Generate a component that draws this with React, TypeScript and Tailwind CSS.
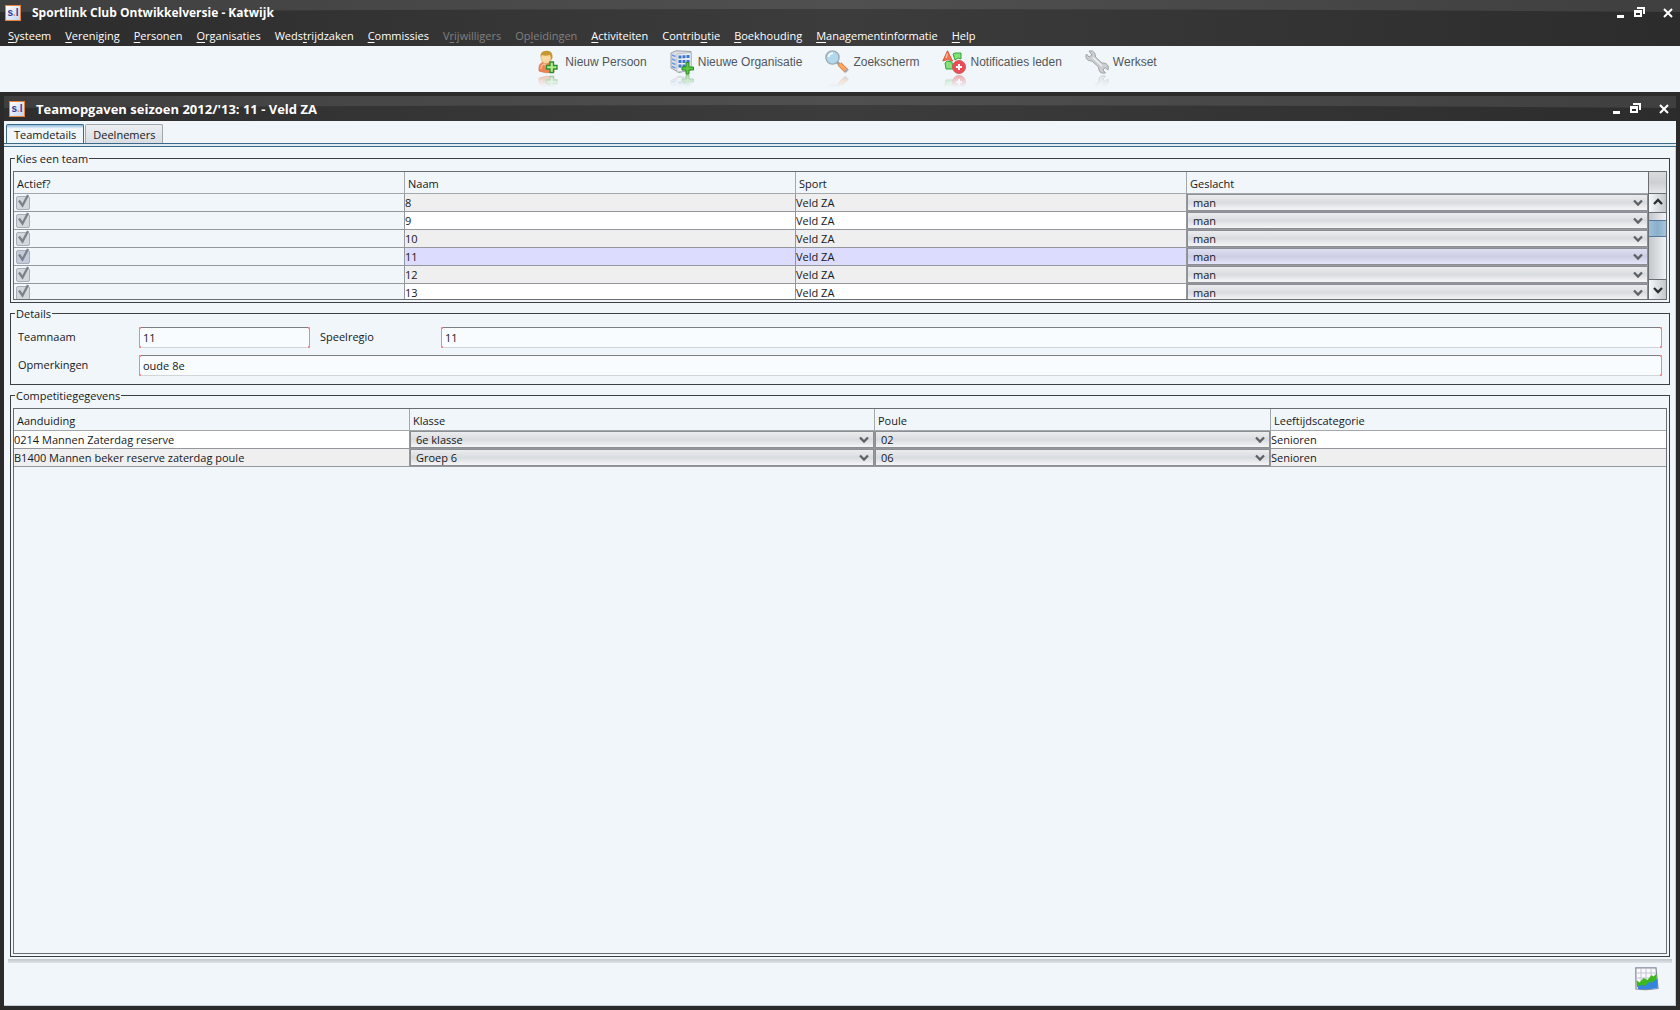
import { useId, useState } from 'react'
import type { ReactNode } from 'react'

const MENU = [
  { pre: '', key: 'S', post: 'ysteem' },
  { pre: '', key: 'V', post: 'ereniging' },
  { pre: '', key: 'P', post: 'ersonen' },
  { pre: '', key: 'O', post: 'rganisaties' },
  { pre: 'Weds', key: 't', post: 'rijdzaken' },
  { pre: '', key: 'C', post: 'ommissies' },
  { pre: 'V', key: 'r', post: 'ijwilligers', disabled: true },
  { pre: 'Op', key: 'l', post: 'eidingen', disabled: true },
  { pre: '', key: 'A', post: 'ctiviteiten' },
  { pre: 'Contrib', key: 'u', post: 'tie' },
  { pre: '', key: 'B', post: 'oekhouding' },
  { pre: '', key: 'M', post: 'anagementinformatie' },
  { pre: '', key: 'H', post: 'elp' },
]

const TEAMS = ['8', '9', '10', '11', '12', '13']

const COMPETITIONS = [
  { name: '0214 Mannen Zaterdag reserve', klasse: '6e klasse', poule: '02', age: 'Senioren' },
  { name: 'B1400 Mannen beker reserve zaterdag poule', klasse: 'Groep 6', poule: '06', age: 'Senioren' },
]

function AppLogo() {
  return (
    <span className="flex h-4 w-4 shrink-0 items-center justify-center border border-[#e8813a] bg-linear-to-br from-white to-[#c3d3ee] font-['Liberation_Sans'] text-[10px] leading-none font-bold text-[#2b3a9c]">
      s<span className="text-[#f08a3c]">.</span>l
    </span>
  )
}

function WindowControls() {
  return (
    <div className="flex items-center text-white">
      <button aria-label="Minimaliseren" className="flex h-4 w-[17px] items-center justify-start">
        <svg width="8" height="12" viewBox="0 0 8 12"><rect x="0" y="8" width="7" height="3" fill="#fff" /></svg>
      </button>
      <button aria-label="Herstellen" className="flex h-4 w-[29px] items-center justify-start">
        <svg width="12" height="12" viewBox="0 0 12 12" shapeRendering="crispEdges">
          <path d="M3 0h8v7H9V2H3z" fill="#fff" />
          <path d="M0 3h8v7H0zM2 6v2h4V6z" fill="#fff" fillRule="evenodd" />
        </svg>
      </button>
      <button aria-label="Sluiten" className="flex h-4 w-[10px] items-center justify-center">
        <svg width="10" height="10" viewBox="0 0 10 10"><path d="M1 1l8 8M9 1L1 9" stroke="#fff" strokeWidth="2" /></svg>
      </button>
    </div>
  )
}

/* Curved gloss along the top of a title bar */
function Gloss() {
  const id = useId()
  return (
    <svg className="absolute inset-x-0 top-0 h-3 w-full" viewBox="0 0 1680 12" preserveAspectRatio="none" aria-hidden="true">
      <defs>
        <linearGradient id={id}>
          <stop offset="0" stopColor="#3f3f3f" />
          <stop offset="0.5" stopColor="#505050" />
          <stop offset="1" stopColor="#3f3f3f" />
        </linearGradient>
      </defs>
      <path d="M0 0H1680V12Q840 6 0 12z" fill={`url(#${id})`} />
    </svg>
  )
}

function Reflected({ children }: { children: ReactNode }) {
  const id = useId()
  return (
    <svg width="24" height="38" viewBox="0 0 24 38" className="shrink-0" aria-hidden="true">
      <defs>
        <linearGradient id={`${id}g`} x1="0" y1="24" x2="0" y2="37" gradientUnits="userSpaceOnUse">
          <stop offset="0" stopColor="#fff" stopOpacity="0.5" />
          <stop offset="1" stopColor="#fff" stopOpacity="0" />
        </linearGradient>
        <mask id={id} maskUnits="userSpaceOnUse" x="0" y="24" width="24" height="14">
          <rect x="0" y="24" width="24" height="14" fill={`url(#${id}g)`} />
        </mask>
      </defs>
      {children}
      <g mask={`url(#${id})`}>
        <g transform="translate(0 49) scale(1 -1)">{children}</g>
      </g>
    </svg>
  )
}

function PersonIcon() {
  return (
    <Reflected>
      <path d="M2 21V18Q2 13 7 12H12Q17 13 17 17V22Q9 24 2 21z" fill="#ee8353" stroke="#d97a50" strokeWidth="0.8" />
      <path d="M4 19Q4 15 7 14l4 3" stroke="#f9b690" strokeWidth="1.6" fill="none" />
      <ellipse cx="9" cy="7.500" rx="5" ry="6" fill="#fbd7a4" stroke="#dba55f" strokeWidth="0.6" />
      <path d="M3.500 7Q3 1 9 .8Q16 0 15.500 8Q14.500 10 13.500 11Q14.500 7 13 5Q8 6.500 5 5Q4 6 3.500 7z" fill="#c7982f" />
      <path d="M12 14h3.500v-3.500h3.500V14H22.500v3.500h-3.500v3.500h-3.500V17.500H12v-3.500z" transform="translate(-2.500 1.500)" fill="#b5ea8a" stroke="#2c8f2d" strokeWidth="1.300" />
    </Reflected>
  )
}

function BuildingIcon() {
  return (
    <Reflected>
      <path d="M1 3L6 0.800L21 1.500V20L9 22.500L1 18z" fill="#dcdfe3" stroke="#92979f" strokeWidth="0.9" />
      <path d="M7 4L21 2.500V20L7 22z" fill="#eceff3" stroke="#a6abb3" strokeWidth="0.6" />
      <path d="M8.500 5.500h3v3h-3zM12.500 5.200h3v3h-3zM16.500 5h3v3h-3zM8.500 10h3v3h-3zM12.500 10h3v3h-3zM16.500 10h3v3h-3zM8.500 14.500h3v3h-3zM12.500 14.500h3v3h-3z" fill="#3a75cc" />
      <path d="M2 5l3.500 1.500M2 9l3.500 1.500M2 13l3.500 1.500M2 16.500l3.500 1.500" stroke="#6d9ce0" strokeWidth="1.800" />
      <path d="M12 17h4v-4.500h3V17h4.500v3H19v4h-3v-4h-4z" fill="#5cc83c" stroke="#2a8a25" strokeWidth="1" />
    </Reflected>
  )
}

function SearchIcon() {
  return (
    <Reflected>
      <path d="M12 12l4 4" stroke="#9aa2aa" strokeWidth="3" />
      <path d="M14.500 14l7 7" stroke="#cf7b42" strokeWidth="4.600" />
      <path d="M14.500 14l6 6" stroke="#ffa85c" strokeWidth="3.200" />
      <path d="M20 22l3-3" stroke="#a9a9b4" strokeWidth="2.400" />
      <circle cx="7.500" cy="7.500" r="6.600" fill="#b0d8ee" stroke="#9fabb3" strokeWidth="1.400" />
      <path d="M3.500 7Q4 3.500 8 3.200" stroke="#eefaff" strokeWidth="2" fill="none" />
    </Reflected>
  )
}

function NotifyIcon() {
  return (
    <Reflected>
      <path d="M11 4l2-1h6v6l-3-1-3 2z" fill="#86e07a" stroke="#2fa53a" strokeWidth="1" />
      <path d="M3 13l2-2 5 1 1 7H4z" fill="#86e07a" stroke="#2fa53a" strokeWidth="1" />
      <path d="M5.500 0.800L10.500 11L5.500 9.500L0.800 11z" fill="#f37450" stroke="#d8573a" strokeWidth="1" />
      <path d="M5.500 3.500L4 8" stroke="#ffc3a8" strokeWidth="1.300" />
      <circle cx="17" cy="17" r="6.500" fill="#ea4d55" stroke="#cf5a5c" strokeWidth="1" />
      <path d="M16 14h2v2h2v2h-2v2h-2v-2h-2v-2h2z" fill="#fff" />
    </Reflected>
  )
}

function WrenchIcon() {
  return (
    <Reflected>
      <path
        d="M4 1Q8 -.2 10 3.500L10.500 7L17 13Q22 12.500 23.500 17L23 20L20 17.500L18 20L20.500 23Q15 24 14 20L13.500 17L7 11Q1 11 .8 6L1.500 4L4 7L7 5z"
        fill="#cbcdd0" stroke="#9a9da2" strokeWidth="0.9"
      />
      <path d="M8 7.500l9 8.500" stroke="#f0f1f2" strokeWidth="1.600" />
    </Reflected>
  )
}

function ChartIcon() {
  return (
    <svg width="24" height="24" viewBox="0 0 24 24" aria-hidden="true">
      <path d="M.8 .8H21L22 12L23 21.500Q12 23.500 1 22z" fill="#fafaff" stroke="#85889c" strokeWidth="1.200" />
      <path d="M6 1v20M11 1v20M16 1v20M1 6h20M1 11h20" stroke="#bdbdd0" strokeWidth="0.9" />
      <path d="M1.500 13l3 2.500 4-4.500 4 2 4-5 2 1.500 3-3v8L10 21l-6 .5L2 20z" fill="#3cb81c" />
      <path d="M3 22v-3l4-1 3 1 4-4 3 .5 5.500-4V21Q13 23 3 22z" fill="#3585de" />
    </svg>
  )
}

const TOOLS = [
  { label: 'Nieuw Persoon', icon: <PersonIcon /> },
  { label: 'Nieuwe Organisatie', icon: <BuildingIcon /> },
  { label: 'Zoekscherm', icon: <SearchIcon /> },
  { label: 'Notificaties leden', icon: <NotifyIcon /> },
  { label: 'Werkset', icon: <WrenchIcon /> },
]

function Combo({ value, label, selected }: { value: string; label: string; selected?: boolean }) {
  return (
    <div className="relative">
      <select
        aria-label={label}
        className={`block h-[17px] w-full appearance-none border border-[#8b8f93] pl-[5px] text-[11px] leading-[15px] outline-none ${
          selected
            ? 'bg-linear-to-b from-[#dfdff4] via-[#cdcde3] to-[#e4e4fa]'
            : 'bg-linear-to-b from-[#ebecee] via-[#d9dcdf] to-[#f4f5f7]'
        }`}
      >
        <option>{value}</option>
      </select>
      <svg className="pointer-events-none absolute top-[5px] right-[5px]" width="10" height="8" viewBox="0 0 10 8">
        <path d="M1 1.500l4 4 4-4" fill="none" stroke="#5d6166" strokeWidth="2.300" />
      </svg>
    </div>
  )
}

function Check({ label, selected }: { label: string; selected: boolean }) {
  return (
    <div className="relative h-[17px] pl-[2px] pt-[2px]">
      <input
        type="checkbox" checked disabled aria-label={label}
        className={`block h-[14px] w-[14px] appearance-none rounded-[2px] border border-[#a9afb6] ${selected ? 'bg-[#c3cbdd]' : 'bg-[#d3d8dd]'}`}
      />
      <svg className="pointer-events-none absolute top-0 left-[2px]" width="14" height="15" viewBox="0 0 14 15">
        <path d="M3 6.500l3.500 5L12 1" fill="none" stroke="#7c828a" strokeWidth="2.300" />
      </svg>
    </div>
  )
}

function TextBox({ id, value }: { id: string; value: string }) {
  return (
    <div className="relative">
      <input
        id={id} defaultValue={value}
        className="block h-[21px] w-full rounded-[2px] border border-t-[#7c8085] border-r-[#a3a8ad] border-b-[#d0d5d9] border-l-[#a3a8ad] bg-[#f8fcff] px-[3px] outline-none"
      />
      <span className="absolute top-0 left-0 h-[2px] w-[2px] bg-[#f29090]" />
      <span className="absolute top-0 right-0 h-[2px] w-[2px] bg-[#f29090]" />
      <span className="absolute bottom-0 left-0 h-[2px] w-[2px] bg-[#f29090]" />
      <span className="absolute right-0 bottom-0 h-[2px] w-[2px] bg-[#f29090]" />
    </div>
  )
}

function Group({ title, className = '', children }: { title: string; className?: string; children: ReactNode }) {
  return (
    <fieldset className={`min-w-0 border border-[#3d3f43] px-[2px] pt-[5px] pb-[2px] ${className}`}>
      <legend className="ml-[2px] h-[15px] px-px leading-[15px]">{title}</legend>
      {children}
    </fieldset>
  )
}

function Th({ children, className = '' }: { children: ReactNode; className?: string }) {
  return (
    <th className={`h-[22px] border-r border-b border-[#a4a8ac] p-0 pt-[3px] pl-[3px] text-left leading-[18px] font-normal last:border-r-0 ${className}`}>
      {children}
    </th>
  )
}

const TD = 'h-[18px] border-r border-b border-[#94979b] p-0 leading-[17px] last:border-r-0'

export default function App() {
  const [tab, setTab] = useState('Teamdetails')

  return (
    <div className="flex h-screen flex-col bg-[#f0f6fa] font-['Open_Sans',sans-serif] text-[11px] text-[#16181c]">
      {/* Main title bar and menu */}
      <header className="relative bg-linear-to-r from-[#2c2c2c] via-[#3c3c3c] to-[#2c2c2c]">
        <Gloss />
        <div className="relative flex h-[25px] items-center pr-[7px] pl-[5px]">
          <AppLogo />
          <h1 className="ml-[11px] flex-1 text-[12px] font-bold text-white">Sportlink Club Ontwikkelversie - Katwijk</h1>
          <WindowControls />
        </div>
        <nav className="relative flex h-[21px] items-center gap-[14px] pt-px pl-2">
          {MENU.map(m => (
            <button key={m.key + m.post} disabled={m.disabled} className={m.disabled ? 'text-[#808080]' : 'text-white'}>
              {m.pre}<span className="underline underline-offset-2">{m.key}</span>{m.post}
            </button>
          ))}
        </nav>
      </header>

      {/* Toolbar */}
      <div className="flex h-[46px] justify-center gap-[23px] pt-[4px] pl-[14px] font-['Liberation_Sans',sans-serif] text-[12px] text-[#53575b]">
        {TOOLS.map(t => (
          <button key={t.label} className="flex h-[38px] items-start gap-1">
            {t.icon}
            <span className="pt-[3px] leading-[18px]">{t.label}</span>
          </button>
        ))}
      </div>

      {/* Team window */}
      <section className="flex flex-1 flex-col border-4 border-[#2b2b2b]">
        <div className="relative flex h-[25px] items-center bg-linear-to-r from-[#2e2e2e] via-[#3c3c3c] to-[#2c2c2c] pr-[7px] pl-[5px]">
          <Gloss />
          <div className="relative flex flex-1 items-center">
            <AppLogo />
            <h2 className="ml-[11px] flex-1 text-[13px] leading-[18px] font-bold text-white">Teamopgaven seizoen 2012/'13: 11 - Veld ZA</h2>
            <WindowControls />
          </div>
        </div>

        <div className="flex gap-px pt-[3px] pl-[2px]" role="tablist">
          {['Teamdetails', 'Deelnemers'].map(t => (
            <button
              key={t} role="tab" aria-selected={tab === t} onClick={() => setTab(t)}
              className={`h-[19px] rounded-t-[2px] border border-b-0 px-[7px] pt-[2px] ${
                tab === t
                  ? 'relative -mb-px h-5 border-[#3c6a8c] bg-linear-to-b from-[#8dbbdc] via-[#f0f6fa] via-20% to-[#f0f6fa]'
                  : 'border-[#a2a7ac] bg-linear-to-b from-[#eceff2] to-[#d9dee3]'
              }`}
            >
              {t}
            </button>
          ))}
        </div>
        <div className="h-1 border-y border-[#3c6a8c] bg-[#e0eaf1]" />

        <div className="flex flex-1 flex-col gap-[3px] border-r border-[#c5ccd6] px-[6px] pt-1 pr-[5px]">
          <Group title="Kies een team">
            <div className="flex h-[129px] overflow-hidden border border-[#6a6e73]">
              <div className="min-w-0 flex-1">
                <table className="w-full table-fixed border-separate border-spacing-0">
                  <thead>
                    <tr>
                      <Th className="w-[391px]">Actief?</Th>
                      <Th className="w-[391px]">Naam</Th>
                      <Th className="w-[391px]">Sport</Th>
                      <Th>Geslacht</Th>
                    </tr>
                  </thead>
                  <tbody>
                    {TEAMS.map((team, i) => {
                      const selected = team === '11'
                      return (
                        <tr key={team} className={selected ? 'bg-[#dcdcff]' : i % 2 ? 'bg-white' : 'bg-[#efefef]'}>
                          <td className={`${TD} bg-[#f0f6fa]`}><Check label={`Team ${team} actief`} selected={selected} /></td>
                          <td className={TD}>{team}</td>
                          <td className={TD}>Veld ZA</td>
                          <td className={TD}><Combo label={`Geslacht team ${team}`} value="man" selected={selected} /></td>
                        </tr>
                      )
                    })}
                  </tbody>
                </table>
              </div>
              {/* Scroll bar */}
              <div className="flex w-[18px] flex-col border-l border-[#6a6e73]">
                <div className="h-[21px] bg-linear-to-b from-[#d9dbdd] via-[#cdd0d3] to-[#e4e6e8]" />
                <button aria-label="Omhoog" className="flex h-5 items-center justify-center border-y border-[#6a6e73] bg-linear-to-r from-[#f4f8fb] to-[#c3c8cc] pb-[3px]">
                  <svg width="10" height="8" viewBox="0 0 10 8"><path d="M1 6l4-4 4 4" fill="none" stroke="#2b2e31" strokeWidth="2.300" /></svg>
                </button>
                <div className="flex flex-1 flex-col bg-linear-to-r from-[#c3c7cb] to-[#eff3f6] pt-[7px]">
                  <div className="h-[17px] border-y border-[#56789a] bg-linear-to-r from-[#9dbfd9] via-[#8bb0cc] to-[#a5c6de]" />
                </div>
                <button aria-label="Omlaag" className="flex h-5 items-center justify-center border-t border-[#6a6e73] bg-linear-to-r from-[#f4f8fb] to-[#c3c8cc]">
                  <svg width="10" height="8" viewBox="0 0 10 8"><path d="M1 2l4 4 4-4" fill="none" stroke="#2b2e31" strokeWidth="2.300" /></svg>
                </button>
              </div>
            </div>
          </Group>

          <Group title="Details">
            <div className="grid grid-cols-[121px_171px_131px_1fr] items-center gap-y-[7px] px-[5px] pt-px pb-[6px]">
              <label htmlFor="teamnaam">Teamnaam</label>
              <TextBox id="teamnaam" value="11" />
              <label htmlFor="speelregio" className="pl-[10px]">Speelregio</label>
              <TextBox id="speelregio" value="11" />
              <label htmlFor="opmerkingen">Opmerkingen</label>
              <div className="col-span-3"><TextBox id="opmerkingen" value="oude 8e" /></div>
            </div>
          </Group>

          <Group title="Competitiegegevens" className="flex flex-1 flex-col">
            <div className="flex-1 border border-[#6a6e73]">
              <table className="w-full table-fixed border-separate border-spacing-0">
                <thead>
                  <tr>
                    <Th className="w-[396px]">Aanduiding</Th>
                    <Th className="w-[465px]">Klasse</Th>
                    <Th className="w-[396px]">Poule</Th>
                    <Th>Leeftijdscategorie</Th>
                  </tr>
                </thead>
                <tbody>
                  {COMPETITIONS.map((c, i) => (
                    <tr key={c.name} className={i % 2 ? 'bg-[#efefef]' : 'bg-white'}>
                      <td className={TD}>{c.name}</td>
                      <td className={TD}><Combo label={`Klasse ${c.name}`} value={c.klasse} /></td>
                      <td className={TD}><Combo label={`Poule ${c.name}`} value={c.poule} /></td>
                      <td className={TD}>{c.age}</td>
                    </tr>
                  ))}
                </tbody>
              </table>
            </div>
          </Group>
        </div>

        {/* Footer */}
        <footer className="border-r border-b border-[#c5ccd6] pt-[2px] pr-[3px] pl-1">
          <div className="h-1 bg-linear-to-b from-[#c0c5c9] to-[#dfe4e8]" />
          <div className="flex h-[42px] justify-end pt-[4px] pr-[13px]">
            <button aria-label="Grafiek" className="h-6"><ChartIcon /></button>
          </div>
        </footer>
      </section>
    </div>
  )
}
